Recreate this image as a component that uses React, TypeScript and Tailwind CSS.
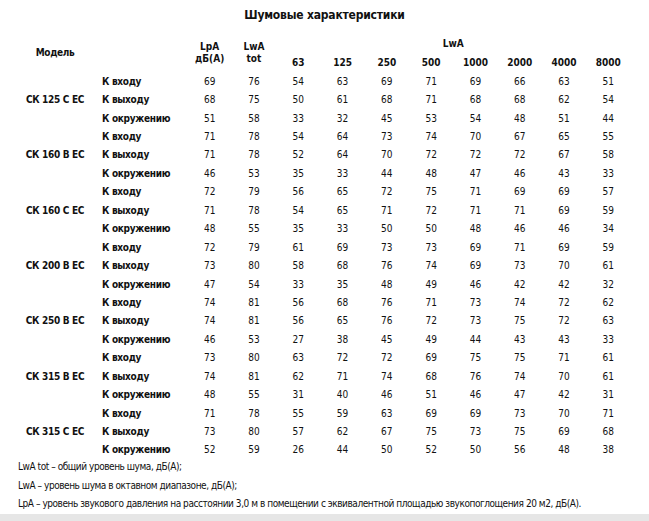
const rows = [
  {
    model: "СК 125 С ЕС",
    data: [
      [69, 76, 54, 63, 69, 71, 69, 66, 63, 51],
      [68, 75, 50, 61, 68, 71, 68, 68, 62, 54],
      [51, 58, 33, 32, 45, 53, 54, 48, 51, 44],
    ],
  },
  {
    model: "СК 160 В ЕС",
    data: [
      [71, 78, 54, 64, 73, 74, 70, 67, 65, 55],
      [71, 78, 52, 64, 70, 72, 72, 72, 67, 58],
      [46, 53, 35, 33, 44, 48, 47, 46, 43, 33],
    ],
  },
  {
    model: "СК 160 С ЕС",
    data: [
      [72, 79, 56, 65, 72, 75, 71, 69, 69, 57],
      [71, 78, 54, 65, 71, 72, 71, 71, 69, 59],
      [48, 55, 35, 33, 50, 50, 48, 46, 46, 34],
    ],
  },
  {
    model: "СК 200 В ЕС",
    data: [
      [72, 79, 61, 69, 73, 73, 69, 71, 69, 59],
      [73, 80, 58, 68, 76, 74, 69, 73, 70, 61],
      [47, 54, 33, 35, 48, 49, 46, 42, 42, 32],
    ],
  },
  {
    model: "СК 250 В ЕС",
    data: [
      [74, 81, 56, 68, 76, 71, 73, 74, 72, 62],
      [74, 81, 56, 65, 76, 72, 73, 75, 72, 63],
      [46, 53, 27, 38, 45, 49, 44, 43, 43, 33],
    ],
  },
  {
    model: "СК 315 В ЕС",
    data: [
      [73, 80, 63, 72, 72, 69, 75, 75, 71, 61],
      [74, 81, 62, 71, 74, 68, 76, 74, 70, 61],
      [48, 55, 31, 40, 46, 51, 46, 47, 42, 31],
    ],
  },
  {
    model: "СК 315 С ЕС",
    data: [
      [71, 78, 55, 59, 63, 69, 69, 73, 70, 71],
      [73, 80, 57, 62, 67, 75, 73, 75, 69, 68],
      [52, 59, 26, 44, 50, 52, 50, 56, 48, 38],
    ],
  },
];

const directions = ["К входу", "К выходу", "К окружению"];
const bands = ["63", "125", "250", "500", "1000", "2000", "4000", "8000"];

export default function App() {
  return (
    <div className="flex h-[521px] w-[649px] flex-col overflow-hidden bg-white font-['DejaVu_Sans_Condensed','DejaVu_Sans',sans-serif] text-[10px] text-[#111]">
      <div className="flex h-[33.5px] shrink-0 items-center justify-center pb-[4px] text-[12px] font-bold tracking-[-0.2px]">
        Шумовые характеристики
      </div>

      <div className="ml-[10px] grid shrink-0 grid-cols-[90px_87.5px_repeat(10,44.3px)] grid-rows-[19px_19.5px_repeat(21,18.45px)] items-center">
        <div className="row-span-2 text-center font-bold tracking-[-0.4px]">Модель</div>
        <div className="row-span-2" />
        <div className="row-span-2 text-center font-bold leading-[11.6px]">
          LpA
          <br />
          дБ(А)
        </div>
        <div className="row-span-2 text-center font-bold leading-[11.6px]">
          LwA
          <br />
          tot
        </div>
        <div className="col-span-8 text-center font-bold">LwA</div>
        {bands.map((b) => (
          <div key={b} className="text-center font-bold">
            {b}
          </div>
        ))}

        {rows.map((group) => (
          <>
            <div key={group.model} className="row-span-3 text-center font-bold tracking-[-0.3px]">
              {group.model}
            </div>
            {group.data.map((values, i) => (
              <>
                <div key={group.model + i} className="pl-[2px] font-bold tracking-[-0.3px]">
                  {directions[i]}
                </div>
                {values.map((v, j) => (
                  <div key={group.model + i + "-" + j} className="text-center">
                    {v}
                  </div>
                ))}
              </>
            ))}
          </>
        ))}
      </div>

      <div className="-mt-[1px] shrink-0 pl-[18px] leading-[18.5px] tracking-[-0.45px]">
        <p>LwA tot – общий уровень шума, дБ(А);</p>
        <p>LwA – уровень шума в октавном диапазоне, дБ(А);</p>
        <p>LpA – уровень звукового давления на расстоянии 3,0 м в помещении с эквивалентной площадью звукопоглощения 20 м2, дБ(А).</p>
      </div>

      <div className="mt-auto h-[10px] shrink-0 bg-[#e6e6e6]" />
    </div>
  );
}
